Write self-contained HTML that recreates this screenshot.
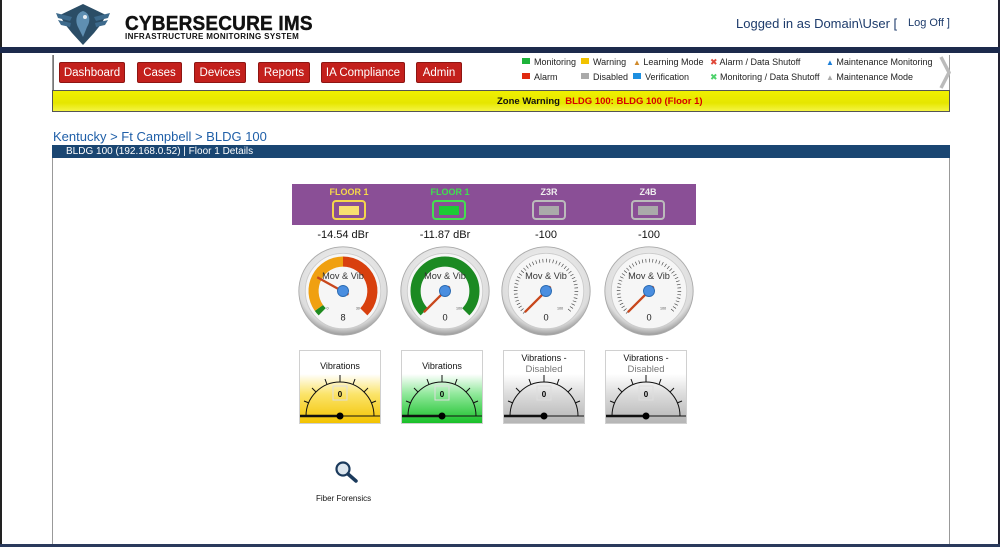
<!DOCTYPE html>
<html><head><meta charset="utf-8">
<style>
*{margin:0;padding:0;box-sizing:border-box}
body{width:1000px;height:547px;overflow:hidden;background:#fff;font-family:"Liberation Sans",Arial,sans-serif;position:relative}
.abs{position:absolute}
.btn{position:absolute;top:62px;height:21px;background:#c3201c;border:1px solid #8e1512;border-radius:2px;color:#fff;font-size:11.5px;display:flex;align-items:center;justify-content:center}
.lg{position:absolute;font-size:9px;color:#222;white-space:nowrap}
.sq{display:inline-block;width:8px;height:6px;margin-right:4px;vertical-align:1px}
.gl{position:absolute;top:200px;width:34px;height:20px;border:2px solid;border-radius:4px}
.gl i{position:absolute;left:5px;top:4px;width:20px;height:9px}
.lab{position:absolute;top:187px;width:80px;text-align:center;font-size:9px;font-weight:bold}
.val{position:absolute;top:229px;width:100px;text-align:center;font-size:11px;color:#111}
.vb{position:absolute;top:350px;width:82px;height:74px;border:1px solid #d0d0d0}
.vb .t{position:absolute;top:9px;width:100%;text-align:center;font-size:9px;color:#111;line-height:11px}
.vb .t span{color:#777;font-size:9.5px}
</style></head><body>
<div class="abs" style="left:0;top:0;width:2px;height:547px;background:#222"></div>
<div class="abs" style="right:0;top:0;width:2px;height:547px;background:#223"></div>
<svg class="abs" style="left:54px;top:3px" width="58" height="43" viewBox="0 0 58 43">
<path d="M29 1 L52 12 L48 20 L40 30 L29 42 L18 30 L10 20 L6 12 Z" fill="#2b4d66"/>
<path d="M2 10 L18 14 L16 18 L4 15Z M4 17 L17 20 L16 24 L7 22Z M56 10 L40 14 L42 18 L54 15Z M54 17 L41 20 L42 24 L51 22Z" fill="#3d6a8c"/>
<path d="M29 8 C22 10 21 18 24 24 L29 34 L33 24 C37 18 36 10 29 8Z" fill="#5f8fb2"/>
<circle cx="31" cy="14" r="2" fill="#e8eef3"/>
</svg>
<div class="abs" style="left:125px;top:13px;font-size:19px;font-weight:900;color:#111;transform:scaleY(1.05);transform-origin:0 0;letter-spacing:0.2px;-webkit-text-stroke:0.4px #111">CYBERSECURE IMS</div>
<div class="abs" style="left:125px;top:32px;font-size:8px;font-weight:bold;color:#111;letter-spacing:0.35px">INFRASTRUCTURE MONITORING SYSTEM</div>
<div class="abs" style="left:736px;top:16px;font-size:13px;color:#1d3b6b">Logged in as Domain\User [</div>
<div class="abs" style="left:908px;top:17px;font-size:11px;color:#1d3b6b">Log Off ]</div>
<div class="abs" style="left:0;top:47px;width:1000px;height:6px;background:#1c2a4c"></div>
<div class="abs" style="left:52px;top:55px;width:898px;height:57px;border:1px solid #999;border-top:none"></div>
<div class="abs" style="left:53px;top:55px;width:1px;height:35px;background:#777"></div>
<div class="btn" style="left:59px;width:66px">Dashboard</div>
<div class="btn" style="left:137px;width:45px">Cases</div>
<div class="btn" style="left:194px;width:52px">Devices</div>
<div class="btn" style="left:258px;width:52px">Reports</div>
<div class="btn" style="left:321px;width:84px">IA Compliance</div>
<div class="btn" style="left:416px;width:46px">Admin</div>
<div class="lg" style="left:522px;top:57px"><span class="sq" style="background:#1db33a"></span>Monitoring</div>
<div class="lg" style="left:581px;top:57px"><span class="sq" style="background:#f2c300"></span>Warning</div>
<div class="lg" style="left:633px;top:57px"><span style="color:#d08a2c;font-size:8px">▲</span> Learning Mode</div>
<div class="lg" style="left:710px;top:57px"><span style="color:#e0483a">✖</span> Alarm / Data Shutoff</div>
<div class="lg" style="left:826px;top:57px"><span style="color:#1d7fd8;font-size:8px">▲</span> Maintenance Monitoring</div>
<div class="lg" style="left:522px;top:72px"><span class="sq" style="background:#e02a10"></span>Alarm</div>
<div class="lg" style="left:581px;top:72px"><span class="sq" style="background:#aaa"></span>Disabled</div>
<div class="lg" style="left:633px;top:72px"><span class="sq" style="background:#1d8fe0"></span>Verification</div>
<div class="lg" style="left:710px;top:72px"><span style="color:#4cd16a">✖</span> Monitoring / Data Shutoff</div>
<div class="lg" style="left:826px;top:72px"><span style="color:#aaa;font-size:8px">▲</span> Maintenance Mode</div>
<svg class="abs" style="left:939px;top:56px" width="12" height="33" viewBox="0 0 12 33"><path d="M2 1 L10 16.5 L2 32" fill="none" stroke="#bbb" stroke-width="3.5"/></svg>
<div class="abs" style="left:52px;top:90px;width:898px;height:22px;background:linear-gradient(#f0f000,#e6e600 60%,#f5f542);border:1px solid #555"></div>
<div class="abs" style="left:497px;top:96px;font-size:9.5px;font-weight:bold;color:#111">Zone Warning&nbsp;&nbsp;<span style="color:#d60000">BLDG 100: BLDG 100 (Floor 1)</span></div>
<div class="abs" style="left:53px;top:129px;font-size:13px;color:#1f5fa8">Kentucky &gt; Ft Campbell &gt; BLDG 100</div>
<div class="abs" style="left:52px;top:145px;width:898px;height:13px;background:#1a4672"></div>
<div class="abs" style="left:66px;top:146px;font-size:10px;color:#fff">BLDG 100 (192.168.0.52) | Floor 1 Details</div>
<div class="abs" style="left:52px;top:158px;width:1px;height:389px;background:#999"></div>
<div class="abs" style="left:949px;top:158px;width:1px;height:389px;background:#999"></div>
<div class="abs" style="left:0;top:544px;width:1000px;height:3px;background:#2a3a5c"></div>

<div class="abs" style="left:292px;top:184px;width:404px;height:41px;background:#8a4f96"></div>
<div class="lab" style="left:309px;color:#f6d84a">FLOOR 1</div>
<div class="lab" style="left:410px;color:#3fe04f">FLOOR 1</div>
<div class="lab" style="left:509px;color:#eee">Z3R</div>
<div class="lab" style="left:608px;color:#eee">Z4B</div>
<div class="gl" style="left:332px;border-color:#f4d64a"><i style="background:#f8e070"></i></div>
<div class="gl" style="left:432px;border-color:#44e050"><i style="background:#1ccc34"></i></div>
<div class="gl" style="left:532px;border-color:#bbb"><i style="background:#aaa"></i></div>
<div class="gl" style="left:631px;border-color:#bbb"><i style="background:#aaa"></i></div>
<div class="val" style="left:293px">-14.54 dBr</div>
<div class="val" style="left:395px">-11.87 dBr</div>
<div class="val" style="left:496px">-100</div>
<div class="val" style="left:599px">-100</div>

<svg width="0" height="0" style="position:absolute"><defs>
<radialGradient id="rg" cx="50%" cy="40%" r="60%"><stop offset="0" stop-color="#fafafa"/><stop offset="0.85" stop-color="#ddd"/><stop offset="1" stop-color="#999"/></radialGradient>
</defs></svg>

<svg class="abs" style="left:297px;top:245px" width="92" height="92" viewBox="0 0 100 100">
<circle cx="50" cy="50" r="48" fill="url(#rg)" stroke="#aaa"/><circle cx="50" cy="50" r="41" fill="#f6f6f6" stroke="#ccc"/>
<path d="M27.4 72.6 A32 32 0 0 1 23.8 68.4" fill="none" stroke="#1f8a1f" stroke-width="11"/>
<path d="M23.8 68.4 A32 32 0 0 1 50 18" fill="none" stroke="#f0a010" stroke-width="11"/>
<path d="M50 18 A32 32 0 0 1 72.6 72.6" fill="none" stroke="#d8400e" stroke-width="11"/>
<text x="50" y="37" font-size="10" text-anchor="middle" fill="#333" font-family="Liberation Sans">Mov &amp; Vib</text>
<line x1="56" y1="54" x2="22" y2="35" stroke="#c8471c" stroke-width="2.5"/>
<circle cx="50" cy="50" r="6" fill="#4a8ee0" stroke="#2a6ab0"/>
<text x="50" y="82" font-size="10" text-anchor="middle" fill="#222">8</text>
<text x="32" y="70" font-size="4" fill="#555">0</text><text x="64" y="70" font-size="4" fill="#555">30</text>
</svg>
<svg class="abs" style="left:399px;top:245px" width="92" height="92" viewBox="0 0 100 100">
<circle cx="50" cy="50" r="48" fill="url(#rg)" stroke="#aaa"/><circle cx="50" cy="50" r="41" fill="#f6f6f6" stroke="#ccc"/>
<path d="M27.4 72.6 A32 32 0 1 1 72.6 72.6" fill="none" stroke="#1b8a22" stroke-width="11"/>
<text x="50" y="37" font-size="10" text-anchor="middle" fill="#333">Mov &amp; Vib</text>
<line x1="55" y1="45" x2="27" y2="73" stroke="#c8471c" stroke-width="2.5"/>
<circle cx="50" cy="50" r="6" fill="#4a8ee0" stroke="#2a6ab0"/>
<text x="50" y="82" font-size="10" text-anchor="middle" fill="#222">0</text>
<text x="62" y="70" font-size="4" fill="#555">100</text>
</svg>
<svg class="abs" style="left:500px;top:245px" width="92" height="92" viewBox="0 0 100 100">
<circle cx="50" cy="50" r="48" fill="url(#rg)" stroke="#aaa"/><circle cx="50" cy="50" r="41" fill="#f6f6f6" stroke="#ccc"/>
<path d="M26.7 73.3 A33 33 0 1 1 73.3 73.3" fill="none" stroke="#444" stroke-width="4" stroke-dasharray="0.7 3"/>
<text x="50" y="37" font-size="10" text-anchor="middle" fill="#333">Mov &amp; Vib</text>
<line x1="55" y1="45" x2="27" y2="73" stroke="#c8471c" stroke-width="2.5"/>
<circle cx="50" cy="50" r="6" fill="#4a8ee0" stroke="#2a6ab0"/>
<text x="50" y="82" font-size="10" text-anchor="middle" fill="#222">0</text>
<text x="62" y="70" font-size="4" fill="#555">100</text>
</svg>
<svg class="abs" style="left:603px;top:245px" width="92" height="92" viewBox="0 0 100 100">
<circle cx="50" cy="50" r="48" fill="url(#rg)" stroke="#aaa"/><circle cx="50" cy="50" r="41" fill="#f6f6f6" stroke="#ccc"/>
<path d="M26.7 73.3 A33 33 0 1 1 73.3 73.3" fill="none" stroke="#444" stroke-width="4" stroke-dasharray="0.7 3"/>
<text x="50" y="37" font-size="10" text-anchor="middle" fill="#333">Mov &amp; Vib</text>
<line x1="55" y1="45" x2="27" y2="73" stroke="#c8471c" stroke-width="2.5"/>
<circle cx="50" cy="50" r="6" fill="#4a8ee0" stroke="#2a6ab0"/>
<text x="50" y="82" font-size="10" text-anchor="middle" fill="#222">0</text>
<text x="62" y="70" font-size="4" fill="#555">100</text>
</svg>

<div class="vb" style="left:299px;background:linear-gradient(#fff 32%,#fbe46a 60%,#f3c300)"><div class="t" style="top:10px">Vibrations</div>
<svg class="abs" style="left:0;top:0" width="80" height="72" viewBox="0 0 80 72">
<path d="M6 65 A34 34 0 0 1 74 65" fill="none" stroke="#111"/>
<g stroke="#111"><line x1="40" y1="31" x2="40" y2="24"/><line x1="27" y1="33.5" x2="25" y2="28"/><line x1="53" y1="33.5" x2="55" y2="28"/><line x1="16" y1="41" x2="12" y2="37"/><line x1="64" y1="41" x2="68" y2="37"/><line x1="9" y1="52" x2="4" y2="50"/><line x1="71" y1="52" x2="76" y2="50"/></g>
<rect x="33" y="35" width="14" height="14" fill="none" stroke="#ddd"/><text x="40" y="46" font-size="8" font-weight="bold" text-anchor="middle">0</text>
<line x1="0" y1="65" x2="82" y2="65" stroke="#111"/><line x1="0" y1="65" x2="40" y2="65" stroke="#111" stroke-width="2.5"/><circle cx="40" cy="65" r="3.5"/></svg></div>
<div class="vb" style="left:401px;background:linear-gradient(#fff 32%,#8fe89a 60%,#18c028)"><div class="t" style="top:10px">Vibrations</div>
<svg class="abs" style="left:0;top:0" width="80" height="72" viewBox="0 0 80 72">
<path d="M6 65 A34 34 0 0 1 74 65" fill="none" stroke="#111"/>
<g stroke="#111"><line x1="40" y1="31" x2="40" y2="24"/><line x1="27" y1="33.5" x2="25" y2="28"/><line x1="53" y1="33.5" x2="55" y2="28"/><line x1="16" y1="41" x2="12" y2="37"/><line x1="64" y1="41" x2="68" y2="37"/><line x1="9" y1="52" x2="4" y2="50"/><line x1="71" y1="52" x2="76" y2="50"/></g>
<rect x="33" y="35" width="14" height="14" fill="none" stroke="#ddd"/><text x="40" y="46" font-size="8" font-weight="bold" text-anchor="middle">0</text>
<line x1="0" y1="65" x2="82" y2="65" stroke="#111"/><line x1="0" y1="65" x2="40" y2="65" stroke="#111" stroke-width="2.5"/><circle cx="40" cy="65" r="3.5"/></svg></div>
<div class="vb" style="left:503px;background:linear-gradient(#fff 32%,#dcdcdc 60%,#b5b5b5)"><div class="t" style="top:2px">Vibrations -<br><span>Disabled</span></div>
<svg class="abs" style="left:0;top:0" width="80" height="72" viewBox="0 0 80 72">
<path d="M6 65 A34 34 0 0 1 74 65" fill="none" stroke="#111"/>
<g stroke="#111"><line x1="40" y1="31" x2="40" y2="24"/><line x1="27" y1="33.5" x2="25" y2="28"/><line x1="53" y1="33.5" x2="55" y2="28"/><line x1="16" y1="41" x2="12" y2="37"/><line x1="64" y1="41" x2="68" y2="37"/><line x1="9" y1="52" x2="4" y2="50"/><line x1="71" y1="52" x2="76" y2="50"/></g>
<rect x="33" y="35" width="14" height="14" fill="none" stroke="#ddd"/><text x="40" y="46" font-size="8" font-weight="bold" text-anchor="middle">0</text>
<line x1="0" y1="65" x2="82" y2="65" stroke="#111"/><line x1="0" y1="65" x2="40" y2="65" stroke="#111" stroke-width="2.5"/><circle cx="40" cy="65" r="3.5"/></svg></div>
<div class="vb" style="left:605px;background:linear-gradient(#fff 32%,#dcdcdc 60%,#b5b5b5)"><div class="t" style="top:2px">Vibrations -<br><span>Disabled</span></div>
<svg class="abs" style="left:0;top:0" width="80" height="72" viewBox="0 0 80 72">
<path d="M6 65 A34 34 0 0 1 74 65" fill="none" stroke="#111"/>
<g stroke="#111"><line x1="40" y1="31" x2="40" y2="24"/><line x1="27" y1="33.5" x2="25" y2="28"/><line x1="53" y1="33.5" x2="55" y2="28"/><line x1="16" y1="41" x2="12" y2="37"/><line x1="64" y1="41" x2="68" y2="37"/><line x1="9" y1="52" x2="4" y2="50"/><line x1="71" y1="52" x2="76" y2="50"/></g>
<rect x="33" y="35" width="14" height="14" fill="none" stroke="#ddd"/><text x="40" y="46" font-size="8" font-weight="bold" text-anchor="middle">0</text>
<line x1="0" y1="65" x2="82" y2="65" stroke="#111"/><line x1="0" y1="65" x2="40" y2="65" stroke="#111" stroke-width="2.5"/><circle cx="40" cy="65" r="3.5"/></svg></div>

<svg class="abs" style="left:334px;top:460px" width="26" height="24" viewBox="0 0 26 24">
<circle cx="9" cy="9" r="6.5" fill="#dde6ee" stroke="#1b3a5c" stroke-width="2.2"/>
<line x1="14" y1="14" x2="22" y2="21" stroke="#1b3a5c" stroke-width="3.5" stroke-linecap="round"/></svg>
<div class="abs" style="left:316px;top:494px;font-size:8px;color:#111">Fiber Forensics</div>
</body></html>
